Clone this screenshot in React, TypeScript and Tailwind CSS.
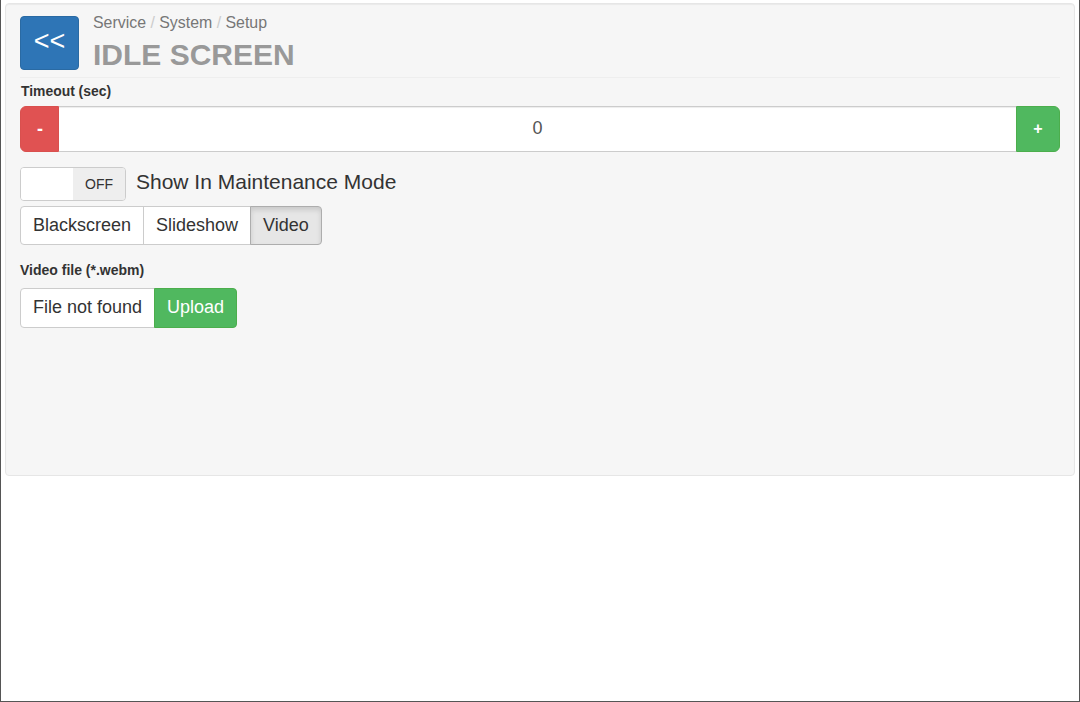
export default function App() {
  return (
    <div className="box-border h-[702px] w-[1080px] border-x border-b border-[#555555] bg-white px-1 pt-[3px] font-['Liberation_Sans',Arial,sans-serif] text-[#333333]">
      <div className="box-border h-[473px] rounded border border-[#e6e6e6] bg-[#f6f6f6] pl-[14px] pr-[14px] pt-3 shadow-[inset_0_1px_1px_rgba(0,0,0,0.05)]">
        <div className="flex h-[62px] gap-[14px] border-b border-[#eeeeee]">
          <button className="flex h-[54px] w-[59px] items-center justify-center rounded border border-[#2a6aa3] bg-[#2e75b6] pb-1 text-[27px] text-white">
            &lt;&lt;
          </button>
          <div className="flex flex-col">
            <div className="mt-[-2px] text-[15.9px] leading-[18px] text-[#777777]">
              Service <span className="text-[#cccccc]">/</span> System <span className="text-[#cccccc]">/</span> Setup
            </div>
            <h1 className="mt-[5px] text-[30px] leading-[35px] font-bold text-[#999999]">IDLE SCREEN</h1>
          </div>
        </div>
        <label className="mt-[5px] ml-px block text-[13.9px] leading-[17px] font-bold">Timeout (sec)</label>
        <div className="mt-[6px] flex h-[46px]">
          <button className="w-[39px] rounded-l-md border border-[#d9504e] bg-[#e05252] pb-px pl-px text-lg font-bold text-white">-</button>
          <div className="flex flex-1 items-center justify-center border-y border-[#cccccc] bg-white pb-[2px] text-lg text-[#555555] shadow-[inset_0_1px_1px_rgba(0,0,0,0.075)]">0</div>
          <button className="w-[44px] rounded-r-md border border-[#4cae4c] bg-[#50b85f] text-base font-bold text-white">+</button>
        </div>
        <div className="mt-[15px] flex items-center gap-[10px]">
          <div className="flex h-[34px] w-[106px] overflow-hidden rounded border border-[#cccccc]">
            <div className="w-[52px] bg-white"></div>
            <div className="flex flex-1 items-center justify-center bg-[#eeeeee] text-sm text-[#333333]">OFF</div>
          </div>
          <span className="pb-1 text-[21px] leading-[28px]">Show In Maintenance Mode</span>
        </div>
        <div className="mt-[5px] flex h-[39px] text-lg">
          <div className="flex items-center rounded-l border border-[#cccccc] bg-white px-3 pb-[2px]">Blackscreen</div>
          <div className="ml-[-1px] flex items-center border border-[#cccccc] bg-white px-3 pb-[2px]">Slideshow</div>
          <div className="ml-[-1px] flex items-center rounded-r border border-[#adadad] bg-[#e6e6e6] px-3 pb-[2px] shadow-[inset_0_3px_5px_rgba(0,0,0,0.125)]">Video</div>
        </div>
        <label className="mt-[17px] block text-sm leading-[17px] font-bold">Video file (*.webm)</label>
        <div className="mt-[9px] flex h-10 text-lg">
          <div className="flex items-center rounded-l border border-[#cccccc] bg-white px-3 pb-[2px]">File not found</div>
          <button className="ml-[-1px] rounded-r border border-[#4cae4c] bg-[#50b85f] px-3 pb-[2px] text-white">Upload</button>
        </div>
      </div>
    </div>
  );
}
